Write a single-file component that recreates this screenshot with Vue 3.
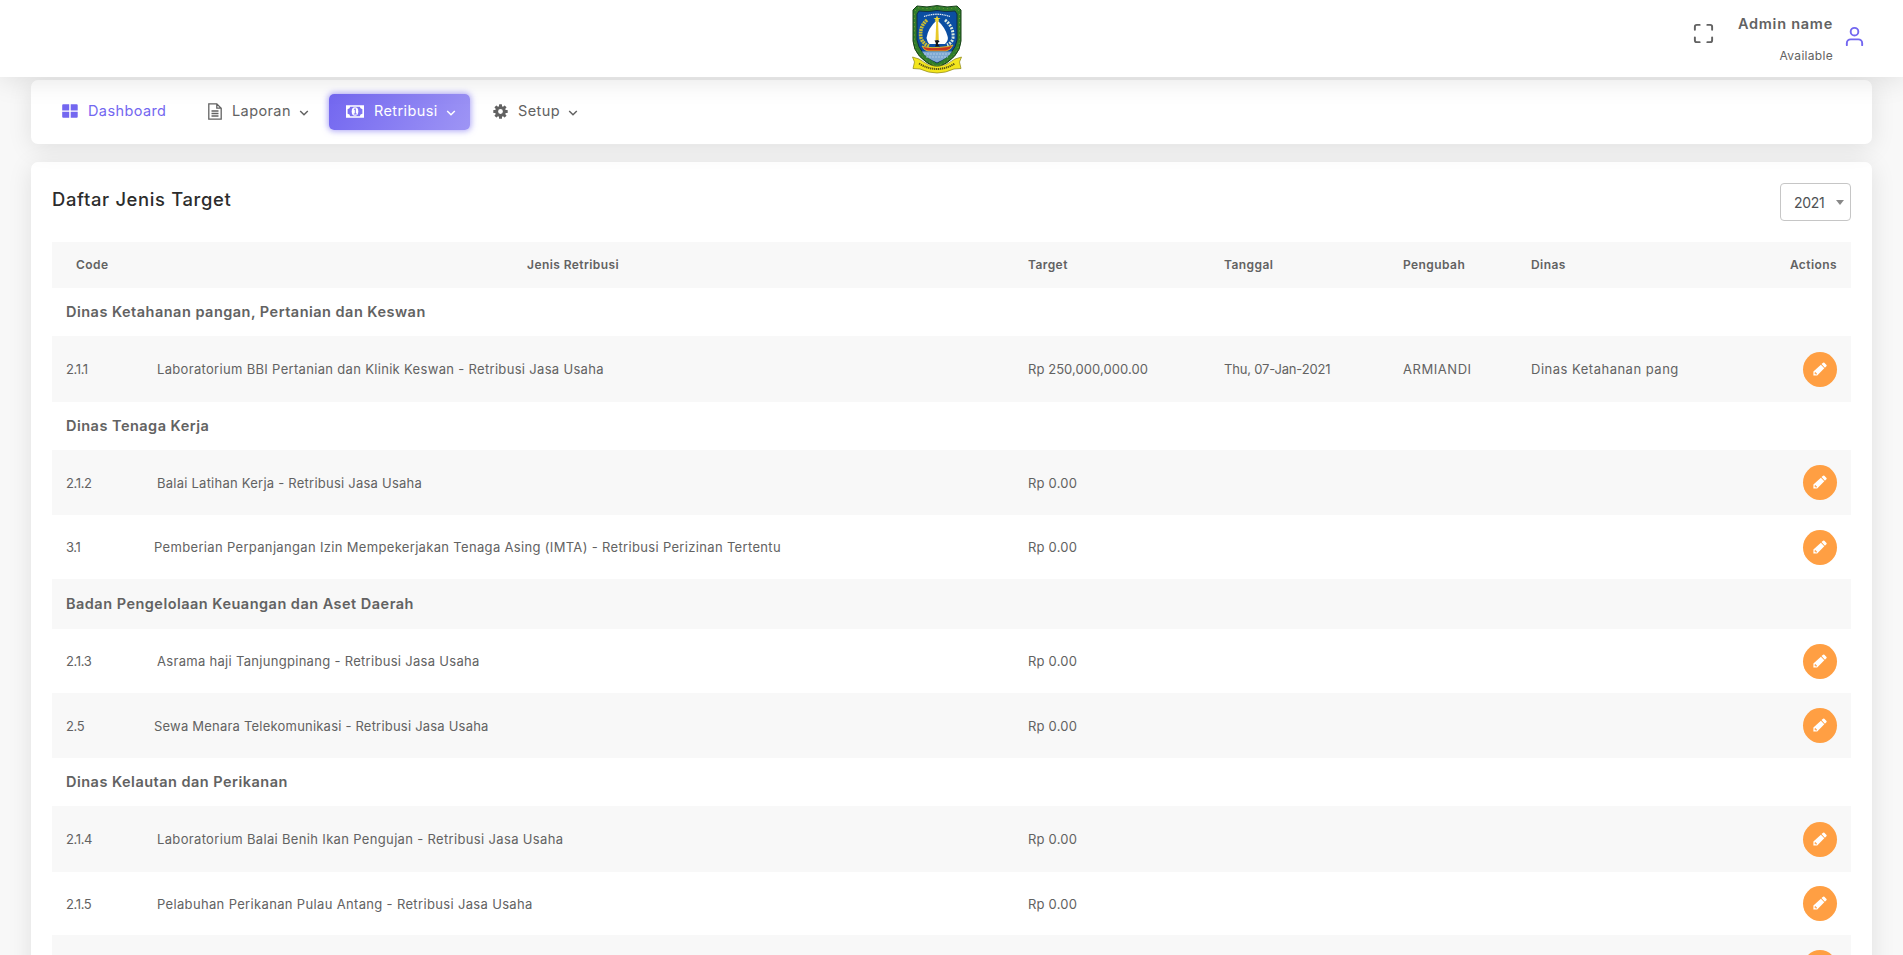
<script setup>
const groups = [
  { kind: 'group', h: 48, name: 'Dinas Ketahanan pangan, Pertanian dan Keswan' },
  { h: 66, shade: true, ls: .32, code: '2.1.1', name: 'Laboratorium BBI Pertanian dan Klinik Keswan - Retribusi Jasa Usaha', target: 'Rp 250,000,000.00', date: 'Thu, 07-Jan-2021', by: 'ARMIANDI', office: 'Dinas Ketahanan pang' },
  { kind: 'group', h: 48, name: 'Dinas Tenaga Kerja' },
  { h: 65, shade: true, ls: .24, code: '2.1.2', name: 'Balai Latihan Kerja - Retribusi Jasa Usaha', target: 'Rp 0.00' },
  { h: 64, ls: .33, code: '3.1', top: true, name: 'Pemberian Perpanjangan Izin Mempekerjakan Tenaga Asing (IMTA) - Retribusi Perizinan Tertentu', target: 'Rp 0.00' },
  { kind: 'group', h: 50, shade: true, name: 'Badan Pengelolaan Keuangan dan Aset Daerah' },
  { h: 64, ls: .3, code: '2.1.3', name: 'Asrama haji Tanjungpinang - Retribusi Jasa Usaha', target: 'Rp 0.00' },
  { h: 65, shade: true, ls: .21, code: '2.5', top: true, name: 'Sewa Menara Telekomunikasi - Retribusi Jasa Usaha', target: 'Rp 0.00' },
  { kind: 'group', h: 48, name: 'Dinas Kelautan dan Perikanan' },
  { h: 66, shade: true, ls: .34, code: '2.1.4', name: 'Laboratorium Balai Benih Ikan Pengujan - Retribusi Jasa Usaha', target: 'Rp 0.00' },
  { h: 63, ls: .34, code: '2.1.5', name: 'Pelabuhan Perikanan Pulau Antang - Retribusi Jasa Usaha', target: 'Rp 0.00' },
  { h: 65, shade: true, ls: .3, code: '', name: '', target: '' },
]
const teeth = [0, 45, 90, 135, 180, 225, 270, 315]
</script>

<template>
  <div class="page">
    <header class="topbar">
      <div></div>
      <svg class="crest" viewBox="0 0 50 68">
        <path d="M5 1Q15 3 25 0.6Q35 3 45 1L49 5V36Q48 53 25 63Q2 53 1 36V5Z" fill="#2f7d2b" stroke="#173f17" stroke-width="1" />
        <path d="M5 1Q15 3 25 0.6Q35 3 45 1L49 5V36Q48 53 25 63Q2 53 1 36V5Z" fill="none" stroke="#7d9a35" stroke-width="1" stroke-dasharray="1.2 3.2" transform="translate(1.5 1.8) scale(.94)" />
        <path d="M7 6Q16 7.500 25 5.500Q34 7.500 43 6L45 9V35Q43 49 25 58Q7 49 5 35V9Z" fill="#0b4ea2" stroke="#102c4c" stroke-width="1" />
        <path d="M12 11.500Q25 7 38 11.500" fill="none" stroke="#dfe8f2" stroke-width="1.300" stroke-dasharray="1.200 .6" />
        <path d="M15 15Q7 22 9 33Q11 39 17 41" fill="none" stroke="#c7bd35" stroke-width="3.600" stroke-dasharray="2 .7" />
        <path d="M33 15Q42 22 41 33Q40 38 35 40" fill="none" stroke="#dcebdc" stroke-width="3" stroke-dasharray="2 1.200" />
        <path d="M25 15Q16 23 14.500 33Q16 39 18 39H33Q37 35 35.500 31Q33 22 25 15Z" fill="#fff" />
        <path d="M24.300 15H26L26.800 35H23.500Z" fill="#e8c928" />
        <path d="M25 10.500L26 13H28.500L26.500 14.500L27.300 17L25 15.500L22.700 17L23.500 14.500L21.500 13H24Z" fill="#f0d838" />
        <path d="M22.500 35.500Q27 34 27.500 36.500Q24 38 28 41.500H23Q25 39 22.500 35.500Z" fill="#151515" />
        <path d="M10 41Q17 44 36 41.500L41 40Q39 45 34 46H16Q12 45.500 10 41Z" fill="#c8351f" stroke="#e0c32d" stroke-width=".9" />
        <path d="M10 46.500H40Q36 53 25 57.500Q14 53 10 46.500Z" fill="#7fa9d2" />
        <path d="M12 49H38M14 52H36" stroke="#bdd3ea" stroke-width=".8" stroke-dasharray="2 1" />
        <path d="M0.500 52L7 54Q25 69 43 54L49.500 52L47.500 57L49 63.500L42 64Q25 72 8 64L1 63.500L2.500 57Z" fill="#f3e51d" stroke="#8a8416" stroke-width=".7" />
        <path d="M7 58.500Q25 69.500 43 58.500" fill="none" stroke="#5a5616" stroke-width="2" stroke-dasharray="1.300 .7" />
      </svg>
      <div class="account">
        <svg class="expand" viewBox="0 0 24 24"><path d="M8 3H5a2 2 0 0 0-2 2v3M21 8V5a2 2 0 0 0-2-2h-3M16 21h3a2 2 0 0 0 2-2v-3M3 16v3a2 2 0 0 0 2 2h3" /></svg>
        <div class="who"><b>Admin name</b><span>Available</span></div>
        <svg class="user" viewBox="0 0 24 24"><path d="M20 21v-2a4 4 0 0 0-4-4H8a4 4 0 0 0-4 4v2" /><circle cx="12" cy="7" r="4" /></svg>
      </div>
    </header>

    <nav class="menu">
      <a class="item dash">
        <svg width="16" height="14" viewBox="0 0 16 14"><path d="M1.200.3h6v6.200h-7V1.300q0-1 1-1zM8.700.3h6q1 0 1 1v5.200h-7zM.2 7.700h7v6h-6q-1 0-1-1zM8.700 7.700h7v5q0 1-1 1h-6z" fill="currentColor" /></svg>
        <span>Dashboard</span>
      </a>
      <a class="item lap">
        <svg width="14" height="17" viewBox="0 0 14 17"><path d="M.8.8h8L13.200 5.200v11H.8zM8.800.8v4.400h4.400M3.500 8h7M3.500 10.500h7M3.500 13h7" fill="none" stroke="currentColor" stroke-width="1.300" /></svg>
        <span>Laporan</span>
        <svg class="chev" viewBox="0 0 10 6"><path d="M1.200 1L5 4.700L8.800 1" /></svg>
      </a>
      <a class="item ret">
        <svg width="18" height="13" viewBox="0 0 18 13"><path fill-rule="evenodd" d="M0 .3h18v12.400H0zM4.200 1.800Q4 3.800 1.600 4.200v4.600Q4 9.200 4.200 11.200h9.600q.2-2 2.600-2.400V4.200Q14 3.800 13.800 1.800z" fill="currentColor" /><ellipse cx="9" cy="6.500" rx="3.300" ry="4.200" fill="currentColor" /><path d="M7.900 4.600L9.300 3.700V9M7.800 9h3" fill="none" stroke="#7d70f0" stroke-width="1" /></svg>
        <span>Retribusi</span>
        <svg class="chev" viewBox="0 0 10 6"><path d="M1.200 1L5 4.700L8.800 1" /></svg>
      </a>
      <a class="item set">
        <svg width="15" height="15" viewBox="-7.500 -7.500 15 15"><rect v-for="a in teeth" :key="a" x="-1.500" y="-7.200" width="3" height="4" rx=".5" fill="currentColor" :transform="`rotate(${a})`" /><circle r="3.900" fill="none" stroke="currentColor" stroke-width="3" /></svg>
        <span>Setup</span>
        <svg class="chev" viewBox="0 0 10 6"><path d="M1.200 1L5 4.700L8.800 1" /></svg>
      </a>
    </nav>

    <main class="card">
      <div class="head">
        <h4>Daftar Jenis Target</h4>
        <div class="year"><span>2021</span><i></i></div>
      </div>
      <div class="row thead">
        <span class="c-code">Code</span><span class="c-name">Jenis Retribusi</span><span>Target</span><span>Tanggal</span><span>Pengubah</span><span>Dinas</span><span class="c-act">Actions</span>
      </div>
      <div v-for="(r, i) in groups" :key="i" class="row" :class="{ shade: r.shade, group: r.kind }" :style="{ height: r.h + 'px' }">
        <template v-if="r.kind"><span class="title">{{ r.name }}</span></template>
        <template v-else>
          <span class="c-code code">{{ r.code }}</span>
          <span class="c-name" :class="{ short: r.top }" :style="{ letterSpacing: r.ls + 'px' }">{{ r.name }}</span>
          <span class="num" :class="{ long: r.date }">{{ r.target }}</span>
          <span class="date">{{ r.date }}</span>
          <span class="by">{{ r.by }}</span>
          <span class="office">{{ r.office }}</span>
          <span class="c-act">
            <button class="edit"><svg viewBox="0 0 14 14"><path fill-rule="evenodd" d="M.4 13.400V9.500L7.900 2.700L11.300 6.300L4.200 13.400ZM1.600 10.700V11.700H2.600V12.500H3.600L4 11.800L2.300 10.100ZM8.500 2.100L10.100.7Q10.800.2 11.400.8L13.500 3Q14 3.700 13.400 4.300L11.900 5.700Z" fill="#fff" /></svg></button>
          </span>
        </template>
      </div>
    </main>
  </div>
</template>

<style>
html, body { background: #f8f8f8; overflow: hidden; }
</style>

<style scoped>
* { box-sizing: border-box; }
.page { height: 955px; overflow: hidden; background: #f8f8f8; color: #626262; font-family: Inter, "Open Sans", sans-serif; font-size: 13px; }
.topbar { position: relative; z-index: 2; height: 77px; background: #fff; box-shadow: 0 4px 25px rgba(0, 0, 0, .1); display: grid; grid-template-columns: 912px 50px 1fr; padding-right: 37px; }
.crest { width: 50px; height: 68px; margin-top: 5px; overflow: visible; }
.account { display: flex; justify-content: flex-end; align-items: flex-start; white-space: nowrap; }
.account svg { flex: none; fill: none; stroke-linecap: round; stroke-linejoin: round; stroke-width: 2; }
.expand { width: 23px; height: 23px; margin: 22px 23px 0 0; stroke: #626262; }
.who { display: flex; flex-direction: column; align-items: flex-end; margin-right: 10px; }
.who b { font-size: 14.500px; line-height: 20px; font-weight: 600; margin-top: 14px; letter-spacing: .75px; }
.who span { font-size: 12px; line-height: 18px; margin-top: 13px; letter-spacing: .3px; }
.user { width: 23px; height: 23px; margin-top: 25px; stroke: #7367f0; }
.menu { position: relative; height: 64px; margin: 3px 31px 0; background: #fff; border-radius: 7px; box-shadow: 0 4px 25px rgba(0, 0, 0, .1); display: flex; align-items: flex-start; padding: 14px 0 0 14px; }
.item { height: 36px; display: flex; align-items: center; padding-left: 17px; font-size: 14.500px; letter-spacing: .4px; border-radius: 5px; }
.item > svg { flex: none; margin-top: -2px; }
.item span { margin: 0 0 2px 10px; line-height: 20px; }
.dash { width: 146px; color: #7367f0; }
.lap { width: 138px; }
.ret { width: 141px; color: #fff; background: linear-gradient(118deg, #7367f0, #9e95f5); box-shadow: 0 0 6px 1px rgba(115, 103, 240, .6); }
.set { margin-left: 6px; }
.item .chev { width: 10px; height: 6px; margin: 1px 0 0 8px; fill: none; stroke: currentColor; stroke-width: 1.500; }
.card { margin: 18px 31px 0; height: 850px; padding: 21px 21px 0; background: #fff; border-radius: 7px; box-shadow: 0 4px 25px rgba(0, 0, 0, .1); }
.head { height: 59px; display: flex; justify-content: space-between; }
h4 { margin: 3px 0 0; font-size: 18.400px; line-height: 26px; font-weight: 500; color: #2c2c2c; letter-spacing: .65px; }
.year { width: 71px; height: 38px; border: 1px solid #c6c6c6; border-radius: 4px; display: flex; align-items: center; padding-left: 13px; font-size: 14px; letter-spacing: -.3px; color: #4e5154; }
.year span { width: 42px; }
.year i { margin-top: 1px; border: 4px solid transparent; border-top: 5px solid #888; border-bottom: 0; }
.row { display: grid; grid-template-columns: 88px 888px 196px 179px 128px 1fr 60px; align-items: center; padding-right: 14px; white-space: nowrap; letter-spacing: .2px; }
.shade, .thead { background: #f8f8f8; }
.thead { height: 46px; font-size: 12px; font-weight: 600; letter-spacing: .42px; padding-bottom: 2px; }
.thead .c-code { padding-left: 24px; }
.thead .c-name { padding-left: 387px; }
.c-code { padding-left: 14px; }
.code { letter-spacing: -.4px; }
.c-name { padding-left: 17px; }
.c-name.short { padding-left: 14px; }
.num.long { letter-spacing: .06px; }
.date { letter-spacing: -.18px; }
.by { letter-spacing: .55px; }
.office { letter-spacing: .5px; }
.c-act { text-align: right; display: flex; justify-content: flex-end; }
.group { grid-template-columns: 1fr; font-weight: 600; font-size: 14.500px; letter-spacing: .48px; padding-bottom: 1px; }
.title { padding-left: 14px; }
.edit { width: 34px; height: 35px; border: 0; padding: 0; border-radius: 50%; background: #ff9f43; display: flex; align-items: center; justify-content: center; }
.edit svg { width: 14px; height: 14px; margin-top: -1px; }
</style>
